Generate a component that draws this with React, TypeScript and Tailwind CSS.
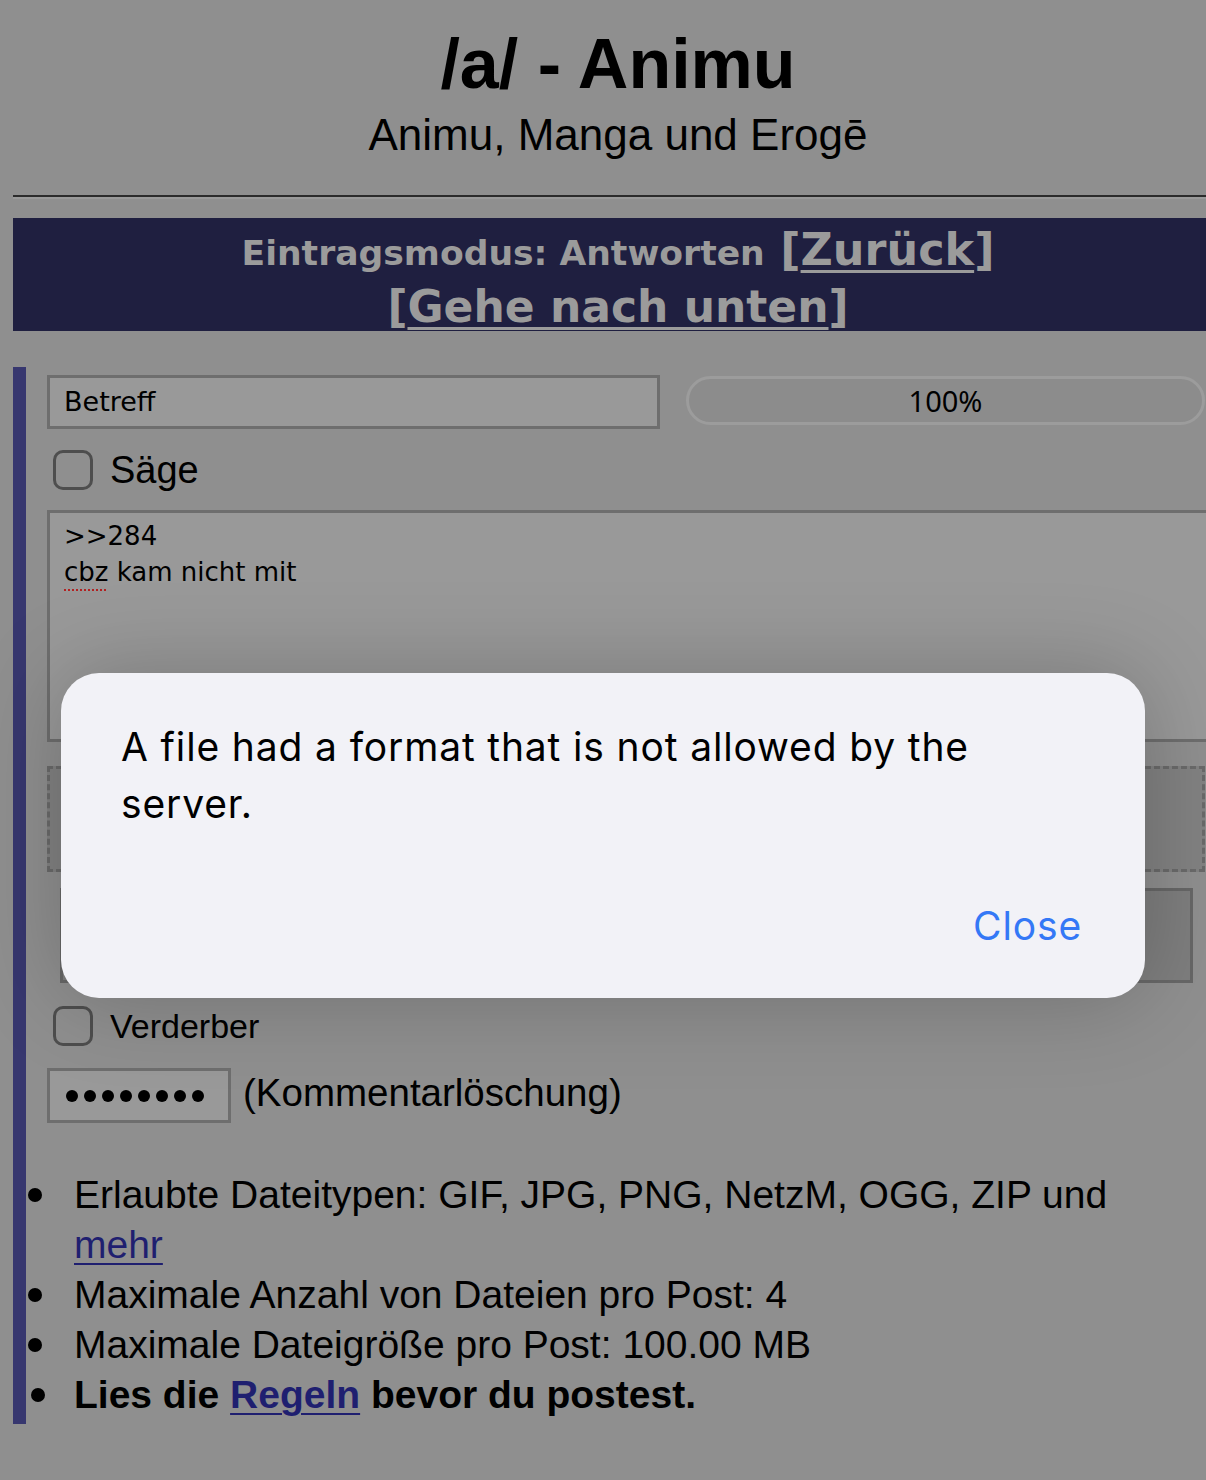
import React from "react";

function Checkbox() {
  return <div className="ml-[6px] w-[40px] h-[40px] shrink-0 rounded-[10px] border-[3px] border-[#4e4e4e]" />;
}

function Bullet({ ml = "ml-[2px]" }: { ml?: string }) {
  return (
    <div className="w-[48px] shrink-0">
      <div className={`${ml} mt-[18px] w-[14px] h-[14px] rounded-full bg-black`} />
    </div>
  );
}

export default function App() {
  return (
    <div className="relative w-[1206px] h-[1480px] overflow-hidden bg-[#8f8f8f] text-black font-['Liberation_Sans',Arial,sans-serif]">
      <div className="ml-[13px] w-[1210px]">
        <h1 className="pt-[24px] text-center text-[70px] font-bold leading-[80px]">/a/ - Animu</h1>
        <div className="mt-[6px] text-center text-[44px] leading-[50px]">Animu, Manga und Erogē</div>
        <div className="mt-[35px] h-0 border-t-2 border-t-[#2b2b2b] border-b-2 border-b-[#9a9a9a]" />
        <div className="mt-[19px] h-[113px] overflow-hidden bg-[#1f1f40] pt-[3px] text-center font-['DejaVu_Sans',Verdana,sans-serif] font-bold text-[#9b9b9b]">
          <div className="text-[44.5px] leading-[57px]">
            <span className="text-[34.6px] leading-none">Eintragsmodus: Antworten</span>{" "}
            [<span className="underline decoration-[3px] underline-offset-[5px]">Zurück</span>]
          </div>
          <div className="text-[44px] leading-[57px]">
            [<span className="underline decoration-[3px] underline-offset-[5px]">Gehe nach unten</span>]
          </div>
        </div>

        <div className="mt-[36px] border-l-[13px] border-[#37376f] pl-[21px] pt-[8px] pb-[4px]">
          <div className="flex items-start gap-[26px]">
            <div className="flex h-[54px] w-[613px] items-center border-[3px] border-[#6e6e6e] bg-[#999999] px-[14px] font-['DejaVu_Sans',sans-serif] text-[27px]">
              Betreff
            </div>
            <div className="mt-[1px] flex h-[49px] w-[519px] items-center justify-center rounded-full border-[3px] border-[#9c9c9c] bg-[#8c8c8c] font-['Noto_Sans',sans-serif] text-[29px]">
              100%
            </div>
          </div>

          <div className="mt-[21px] flex h-[40px] items-center gap-[17px]">
            <Checkbox />
            <span className="text-[38px] leading-[40px]">Säge</span>
          </div>

          <div className="mt-[20px] h-[232px] w-[1180px] border-[3px] border-[#6e6e6e] bg-[#999999] pl-[14px] pt-[5px] font-['DejaVu_Sans',sans-serif] text-[26px] leading-[36px]">
            <div>&gt;&gt;284</div>
            <div>
              <span className="underline decoration-dotted decoration-[#b22222] decoration-2 underline-offset-[8px]">cbz</span> kam nicht mit
            </div>
          </div>

          <div className="mt-[24px] h-[106px] w-[1158px] border-[3px] border-dashed border-[#6a6a6a] bg-[#828282]" />
          <div className="ml-[13px] mt-[16px] h-[95px] w-[1133px] border-[3px] border-[#676767] bg-[#7e7e7e]" />

          <div className="mt-[23px] flex h-[40px] items-center gap-[17px]">
            <Checkbox />
            <span className="text-[34px] leading-[40px]">Verderber</span>
          </div>

          <div className="mt-[22px] flex items-center gap-[12px]">
            <div className="flex h-[55px] w-[184px] items-center gap-[6px] border-[3px] border-[#6e6e6e] bg-[#999999] pl-[16px]">
              {[0, 1, 2, 3, 4, 5, 6, 7].map((i) => (
                <div key={i} className="h-[12px] w-[12px] rounded-full bg-black" />
              ))}
            </div>
            <span className="-mt-[6px] text-[38.5px] leading-[50px]">(Kommentarlöschung)</span>
          </div>

          <div className="-ml-[21px] mt-[47px] text-[39px] leading-[50px]">
            <div className="flex items-start">
              <Bullet />
              <div>
                Erlaubte Dateitypen: GIF, JPG, PNG, NetzM, OGG, ZIP und
                <br />
                <span className="text-[#1f1f70] underline decoration-2 underline-offset-[5px]">mehr</span>
              </div>
            </div>
            <div className="flex items-start">
              <Bullet />
              <div>Maximale Anzahl von Dateien pro Post: 4</div>
            </div>
            <div className="flex items-start">
              <Bullet />
              <div>Maximale Dateigröße pro Post: 100.00 MB</div>
            </div>
            <div className="flex items-start">
              <Bullet ml="ml-[5px]" />
              <div className="font-bold">
                Lies die{" "}
                <span className="text-[#1f1f70] underline decoration-2 underline-offset-[5px]">Regeln</span> bevor du postest.
              </div>
            </div>
          </div>
        </div>
      </div>

      <div className="absolute left-[61px] top-[673px] h-[325px] w-[1084px] rounded-[38px] bg-[#f2f2f7] pt-[45px] shadow-[0_0_90px_rgba(0,0,0,0.22)] font-['Inter',sans-serif]">
        <div className="ml-[60px] w-[900px] text-[39px] leading-[57px] tracking-[0.85px] text-black">
          A file had a format that is not allowed by the server.
        </div>
        <div className="mt-[65px] pr-[63px] text-right text-[39px] leading-[57px] tracking-[0.85px] text-[#3478f6]">Close</div>
      </div>
    </div>
  );
}
